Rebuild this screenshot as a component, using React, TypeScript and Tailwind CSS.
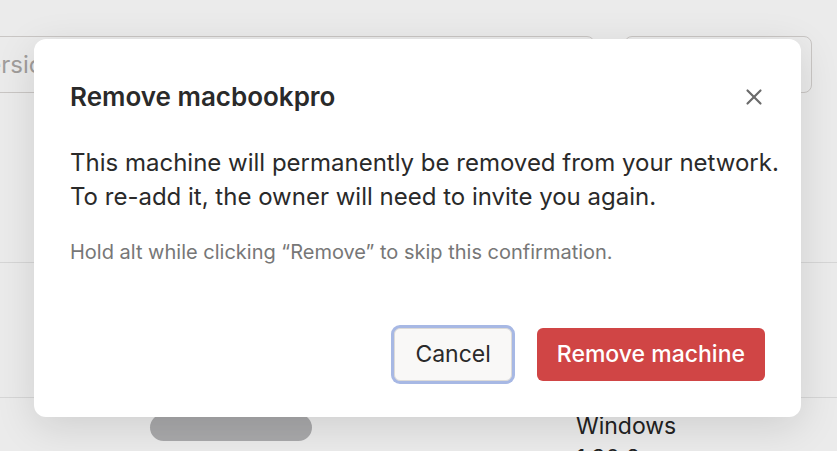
import React from 'react';
import { X } from 'lucide-react';

const Backdrop = () => (
  <div className="absolute inset-0 bg-[#ebebeb] overflow-hidden">
    <div className="flex gap-[29px] pt-[36px] pr-[25px]">
      <div className="flex-1 -ml-[35px] h-[57px] rounded-lg border border-[#c9c6c4] flex items-center pl-[6px] text-[24px] text-[#a09d9b]">
        Versions
      </div>
      <div className="w-[188px] h-[57px] rounded-lg border border-[#c9c6c4]"></div>
    </div>
    <div className="mt-[169px] border-t border-[#d6d6d6]"></div>
    <div className="mt-[134px] border-t border-[#d6d6d6]"></div>
    <div className="flex pt-[16px]">
      <div className="ml-[150px] w-[162px] h-[27px] rounded-full bg-[#a9a9ab]"></div>
      <div className="ml-[264px] -mt-[4px] text-[23px] leading-[32px] text-[#222]">
        <div>Windows</div>
        <div>1.30.2</div>
      </div>
    </div>
  </div>
);

export default function App() {
  return (
    <div className="relative w-[837px] h-[451px] overflow-hidden font-['Inter',sans-serif]">
      <Backdrop />
      <div className="absolute left-[34px] top-[39px] w-[767px] h-[378px] bg-white rounded-xl shadow-[0_10px_40px_rgba(0,0,0,0.12)] px-[36px] pt-[40px]">
        <div className="flex items-center justify-between">
          <h2 className="text-[26px] font-semibold text-[#2a2a2a] leading-[36px]">Remove macbookpro</h2>
          <X size={26} strokeWidth={2} className="text-[#6b6b6b] -mr-[2px]" />
        </div>
        <p className="mt-[31px] -mr-[30px] whitespace-nowrap text-[24px] leading-[34px] text-[#2a2a2a]">
          This machine will permanently be removed from your network.
          <br />
          To re-add it, the owner will need to invite you again.
        </p>
        <p className="mt-[24px] text-[20px] leading-[28px] text-[#777]">
          Hold alt while clicking “Remove” to skip this confirmation.
        </p>
        <div className="mt-[62px] flex justify-end gap-[25px]">
          <button className="h-[53px] px-[20px] rounded-md bg-[#f9f8f7] border border-[#dcdad8] ring-[3px] ring-[#a7b8e4] text-[23px] text-[#2a2a2a]">
            Cancel
          </button>
          <button className="h-[53px] px-[20px] rounded-md bg-[#d04545] text-white text-[23px] font-medium">
            Remove machine
          </button>
        </div>
      </div>
    </div>
  );
}
